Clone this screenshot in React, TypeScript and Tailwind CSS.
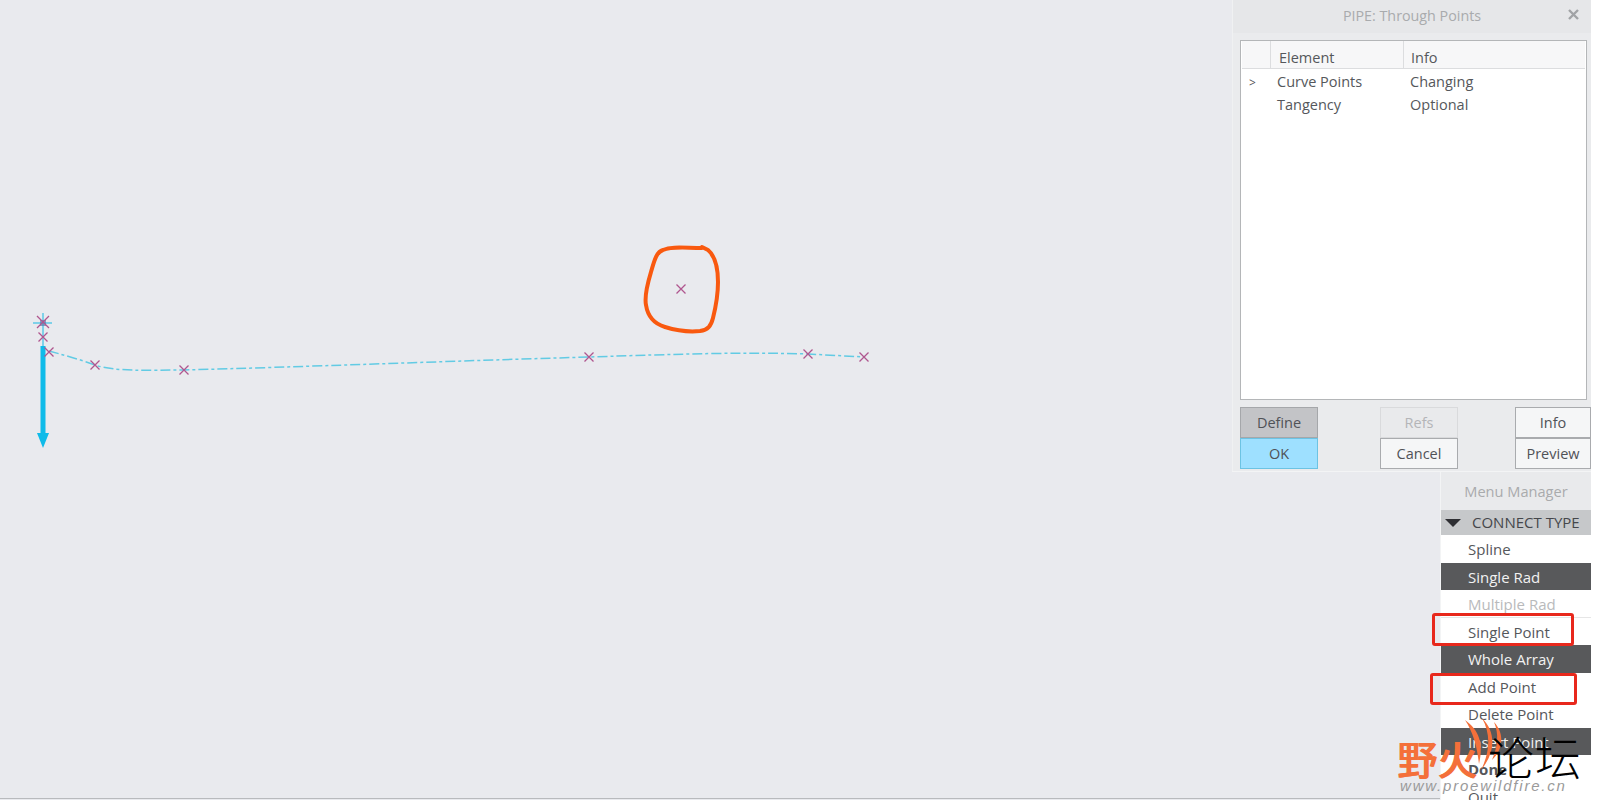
import React from "react";

const F = "font-['Open_Sans','Noto_Sans',sans-serif]";

function X({ x, y, s = 5 }: { x: number; y: number; s?: number }) {
  return (
    <path
      d={`M${x - s} ${y - s}L${x + s} ${y + s}M${x - s} ${y + s}L${x + s} ${y - s}`}
      stroke="#b0568f"
      strokeWidth="1.300"
      fill="none"
    />
  );
}

function Drawing() {
  return (
    <svg width="1232" height="798" className="block">
      <path
        d="M49 351C60 354 82 360 95 365C115 372 150 370 184 370C300 367 450 361 590 357C680 354 740 352 808 354L865 357"
        fill="none"
        stroke="#62cbe4"
        strokeWidth="1.500"
        strokeDasharray="10 3 3 3"
      />
      <path d="M43 313V346M33 323H52" stroke="#5cc9e8" strokeWidth="1.500" fill="none" />
      <rect x="40" y="320" width="6" height="6" fill="#5b7fae" opacity="0.7" />
      <path d="M43 346V434" stroke="#0fbbe9" strokeWidth="5" fill="none" />
      <path d="M37 433H49L43 448Z" fill="#0fbbe9" />
      <X x={43} y={322} s={6} />
      <X x={43} y={337} s={4.500} />
      <X x={49} y={352} s={4.500} />
      <X x={95} y={365} s={4.500} />
      <X x={184} y={370} s={4.500} />
      <X x={589} y={357} s={4.500} />
      <X x={808} y={354} s={4.500} />
      <X x={864} y={357} s={4.500} />
      <X x={681} y={289} s={4.500} />
      <path
        d="M702 248C685 248 672 246 663 250C656 252 654 262 651 272C648 282 644 295 646 305C648 318 655 324 665 327C678 331 690 332 700 331C708 330 711 326 713 318C716 306 718 295 718 282C718 268 715 256 708 250L702 247"
        fill="none"
        stroke="#f9590f"
        strokeWidth="4"
        strokeLinecap="round"
        strokeLinejoin="round"
      />
    </svg>
  );
}

function DialogButton({ label, kind = "normal" }: { label: string; kind?: "normal" | "active" | "ok" | "disabled" }) {
  const styles = {
    normal: "bg-[#f5f6f7] border-[#a9abae] text-[#505257]",
    active: "bg-[#c3c4c7] border-[#a5a7aa] text-[#505257]",
    ok: "bg-[#9ee0ff] border-[#6cc3e3] text-[#505257]",
    disabled: "bg-[#e9eaec] border-[#d9dadc] text-[#b4b5b8]",
  }[kind];
  return (
    <div className={`h-[31px] w-full flex items-center justify-center border text-[14.500px] ${styles}`}>{label}</div>
  );
}

function Dialog() {
  return (
    <div className="w-[359px] h-[471px] bg-[#eaebed] flex flex-col border-l border-[#f0f1f2]">
      <div className="h-[33px] flex items-center relative bg-[#e6e7e9]">
        <div className="w-full text-center text-[14.300px] text-[#a9abad] pb-[2px]">PIPE: Through Points</div>
        <svg width="11" height="11" viewBox="0 0 11 11" className="absolute right-[12px] top-[9px]">
          <path d="M1 1L10 10M10 1L1 10" stroke="#a1a3a6" strokeWidth="2.400" />
        </svg>
      </div>
      <div className="ml-[7px] mr-[4px] mt-[7px] h-[360px] bg-white border border-[#b4b6b8] flex flex-col text-[14.500px] text-[#55575b]">
        <div className="h-[28px] flex bg-[#f7f7f8] border-b border-[#dcdddf] mx-[1px]">
          <div className="w-[29px] border-r border-[#dcdddf]" />
          <div className="w-[133px] border-r border-[#dcdddf] pl-[8px] leading-[33px]">Element</div>
          <div className="pl-[7px] leading-[33px]">Info</div>
        </div>
        <div className="flex h-[23px] items-center mt-[1px]">
          <div className="w-[36px] pl-[8px] text-[12px] pt-[2px]">&gt;</div>
          <div className="w-[133px]">Curve Points</div>
          <div>Changing</div>
        </div>
        <div className="flex h-[23px] items-center">
          <div className="w-[36px]" />
          <div className="w-[133px]">Tangency</div>
          <div>Optional</div>
        </div>
      </div>
      <div className="mt-[7px] ml-[7px] flex">
        <div className="w-[78px] flex flex-col">
          <DialogButton label="Define" kind="active" />
          <DialogButton label="OK" kind="ok" />
        </div>
        <div className="w-[78px] ml-[62px] flex flex-col">
          <DialogButton label="Refs" kind="disabled" />
          <DialogButton label="Cancel" />
        </div>
        <div className="w-[76px] ml-[57px] flex flex-col">
          <DialogButton label="Info" />
          <DialogButton label="Preview" />
        </div>
      </div>
    </div>
  );
}

function MenuRow({ label, kind = "normal" }: { label: string; kind?: "normal" | "dark" | "disabled" | "bold" }) {
  const styles = {
    normal: "bg-white text-[#55575b]",
    dark: "bg-[#58595b] text-[#f2f2f2]",
    disabled: "bg-white text-[#b9babc] border-b border-[#e6e6e6]",
    bold: "bg-white text-[#55575b] font-bold",
  }[kind];
  return <div className={`h-[27.500px] flex items-center pl-[27px] pt-[1px] text-[15px] ${styles}`}>{label}</div>;
}

function MenuManager() {
  return (
    <div className="w-[151px] h-[328px] overflow-hidden bg-[#e9eaec] ml-auto border-l border-[#f3f4f5]">
      <div className="h-[38px] flex items-center justify-center text-[14.600px] text-[#a9abad] pt-[2px]">Menu Manager</div>
      <div className="h-[25px] bg-[#c6c8ca] flex items-center text-[15px] text-[#45474b]">
        <svg width="16" height="8" viewBox="0 0 16 8" className="ml-[4px] mr-[11px]">
          <path d="M0 0H16L8 8Z" fill="#2e2f33" />
        </svg>
        CONNECT TYPE
      </div>
      <div className="flex flex-col">
        <MenuRow label="Spline" />
        <MenuRow label="Single Rad" kind="dark" />
        <MenuRow label="Multiple Rad" kind="disabled" />
        <MenuRow label="Single Point" />
        <MenuRow label="Whole Array" kind="dark" />
        <MenuRow label="Add Point" />
        <MenuRow label="Delete Point" />
        <MenuRow label="Insert Point" kind="dark" />
        <MenuRow label="Done" kind="bold" />
        <MenuRow label="Quit" />
      </div>
    </div>
  );
}

export default function App() {
  return (
    <div className={`relative w-[1604px] h-[800px] overflow-hidden bg-white flex ${F}`}>
      <div className="w-[1591px] h-[800px] bg-[#e9eaee] flex">
        <div className="w-[1232px] shrink-0">
          <Drawing />
        </div>
        <div className="w-[359px] shrink-0 flex flex-col">
          <Dialog />
          <div className="h-[1px] bg-[#f3f4f5]" />
          <MenuManager />
        </div>
      </div>
      {/* red annotations */}
      <div className="absolute left-[1432px] top-[613px] w-[142px] h-[33px] border-[3px] border-[#e8281c] rounded-[3px]" />
      <div className="absolute left-[1430px] top-[673px] w-[147px] h-[32px] border-[3px] border-[#e8281c] rounded-[3px]" />
      {/* watermark */}
      <div className="absolute left-[1397px] top-[737px] text-[40px] leading-[42px] text-[#f4703a] font-['Noto_Sans_CJK_SC',sans-serif] font-medium [text-shadow:1px_0_0_#f4703a]">
        野火
      </div>
      <svg width="60" height="60" viewBox="0 0 60 60" className="absolute left-[1455px] top-[712px]">
        <path d="M10 8C24 18 29 32 24 52C22 34 18 20 10 8Z" fill="#f4703a" />
        <path d="M27 6C41 20 41 40 26 58C35 40 36 22 27 6Z" fill="#f4703a" />
        <path d="M39 10C50 22 48 38 37 48C43 34 44 22 39 10Z" fill="#f4703a" />
      </svg>
      <div className="absolute left-[1488px] top-[731px] text-[46px] leading-[48px] tracking-[1px] text-black font-['Noto_Sans_CJK_SC',sans-serif] font-light">
        论坛
      </div>
      <div className="absolute left-[1400px] top-[778px] text-[15px] leading-[16px] italic tracking-[1.800px] text-[#9a9a9a] font-['Liberation_Sans',sans-serif] whitespace-nowrap">
        www.proewildfire.cn
      </div>
      <div className="absolute left-0 bottom-[1px] w-[1440px] h-[1px] bg-[#b8babd]" />
    </div>
  );
}
